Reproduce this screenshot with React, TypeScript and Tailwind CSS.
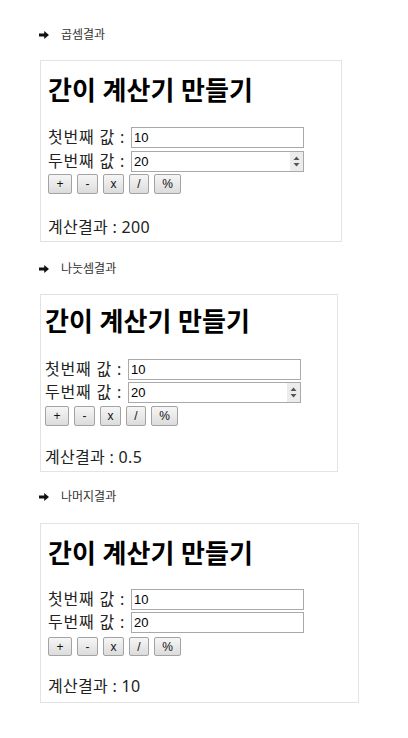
import React from 'react';

type CardProps = {
  title: string;
  result: string;
  spinner?: boolean;
  sectionClass: string;
  cardClass: string;
  row1Class: string;
  row2Class: string;
  btnClass: string;
  resClass: string;
};

const Arrow: React.FC = () => (
  <svg width="10" height="8" viewBox="0 0 10 8" className="shrink-0">
    <path d="M0 2.4 H5.2 V0 L10 4 L5.2 8 V5.6 H0 Z" fill="#111" />
  </svg>
);

const Spinner: React.FC = () => (
  <div className="w-[13px] h-[19px] bg-[#ececec] flex items-center justify-center shrink-0">
    <svg width="7" height="11" viewBox="0 0 7 11">
      <path d="M3.5 0.5 L6.5 4 H0.5 Z" fill="#555" />
      <path d="M3.5 10.5 L6.5 7 H0.5 Z" fill="#555" />
    </svg>
  </div>
);

const Field: React.FC<{ label: string; value: string; spinner?: boolean; className: string }> = ({
  label,
  value,
  spinner,
  className,
}) => (
  <div className={`flex items-center ${className}`}>
    <span className="text-[16px] leading-[21px] tracking-[0.8px] text-[#222] whitespace-pre w-[83px] shrink-0">
      {label}
    </span>
    <div className="w-[173px] h-[21px] border border-[#a9a9a9] bg-white flex items-center pl-[2px]">
      <span className="flex-1 text-[13px] leading-[19px] text-black font-['Liberation_Sans',sans-serif]">{value}</span>
      {spinner && <Spinner />}
    </div>
  </div>
);

const Btn: React.FC<{ label: string; w: string }> = ({ label, w }) => (
  <button
    className={`${w} h-full border border-[#a3a3a3] rounded-[2px] bg-gradient-to-b from-[#f6f6f6] to-[#dcdcdc] text-[12px] text-[#111] flex items-center justify-center font-['Liberation_Sans',sans-serif]`}
  >
    {label}
  </button>
);

const Section: React.FC<CardProps> = (p) => (
  <section className={p.sectionClass}>
    <div className="flex items-center h-[16px] gap-[12px]">
      <Arrow />
      <span className="text-[12px] leading-[16px] text-[#333]">{p.title}</span>
    </div>
    <div className={`border border-[#e3e3e3] bg-white flex flex-col ${p.cardClass}`}>
      <h1 className="text-[26px] leading-[26px] font-bold text-black">간이 계산기 만들기</h1>
      <Field label="첫번째 값 :" value="10" className={p.row1Class} />
      <Field label="두번째 값 :" value="20" spinner={p.spinner} className={p.row2Class} />
      <div className={`flex gap-[5px] ${p.btnClass}`}>
        <Btn label="+" w="w-[24px]" />
        <Btn label="-" w="w-[21px]" />
        <Btn label="x" w="w-[21px]" />
        <Btn label="/" w="w-[20px]" />
        <Btn label="%" w="w-[27px]" />
      </div>
      <p className={`text-[16px] leading-[16px] tracking-[0.3px] text-[#222] ${p.resClass}`}>{p.result}</p>
    </div>
  </section>
);

export default function App() {
  return (
    <div className="min-h-[738px] w-[408px] bg-white pl-[39px] pt-[27px] font-['Noto_Sans','Noto_Sans_CJK_KR',sans-serif]">
      <Section
        title="곱셈결과"
        result="계산결과 : 200"
        spinner
        sectionClass=""
        cardClass="mt-[17px] ml-[1px] w-[302px] h-[182px] pl-[7px] pt-[16px]"
        row1Class="mt-[24px]"
        row2Class="mt-[3px]"
        btnClass="mt-[2px] h-[20px]"
        resClass="mt-[25px]"
      />
      <Section
        title="나눗셈결과"
        result="계산결과 : 0.5"
        spinner
        sectionClass="mt-[19px]"
        cardClass="mt-[17px] ml-[1px] w-[298px] h-[178px] pl-[4px] pt-[13px]"
        row1Class="mt-[25px]"
        row2Class="mt-[2px]"
        btnClass="mt-[3px] h-[20px]"
        resClass="mt-[23px]"
      />
      <Section
        title="나머지결과"
        result="계산결과 : 10"
        sectionClass="mt-[17px]"
        cardClass="mt-[18px] ml-[1px] w-[319px] h-[180px] pl-[7px] pt-[16px]"
        row1Class="mt-[23px]"
        row2Class="mt-[2px]"
        btnClass="mt-[4px] h-[19px]"
        resClass="mt-[22px]"
      />
    </div>
  );
}
